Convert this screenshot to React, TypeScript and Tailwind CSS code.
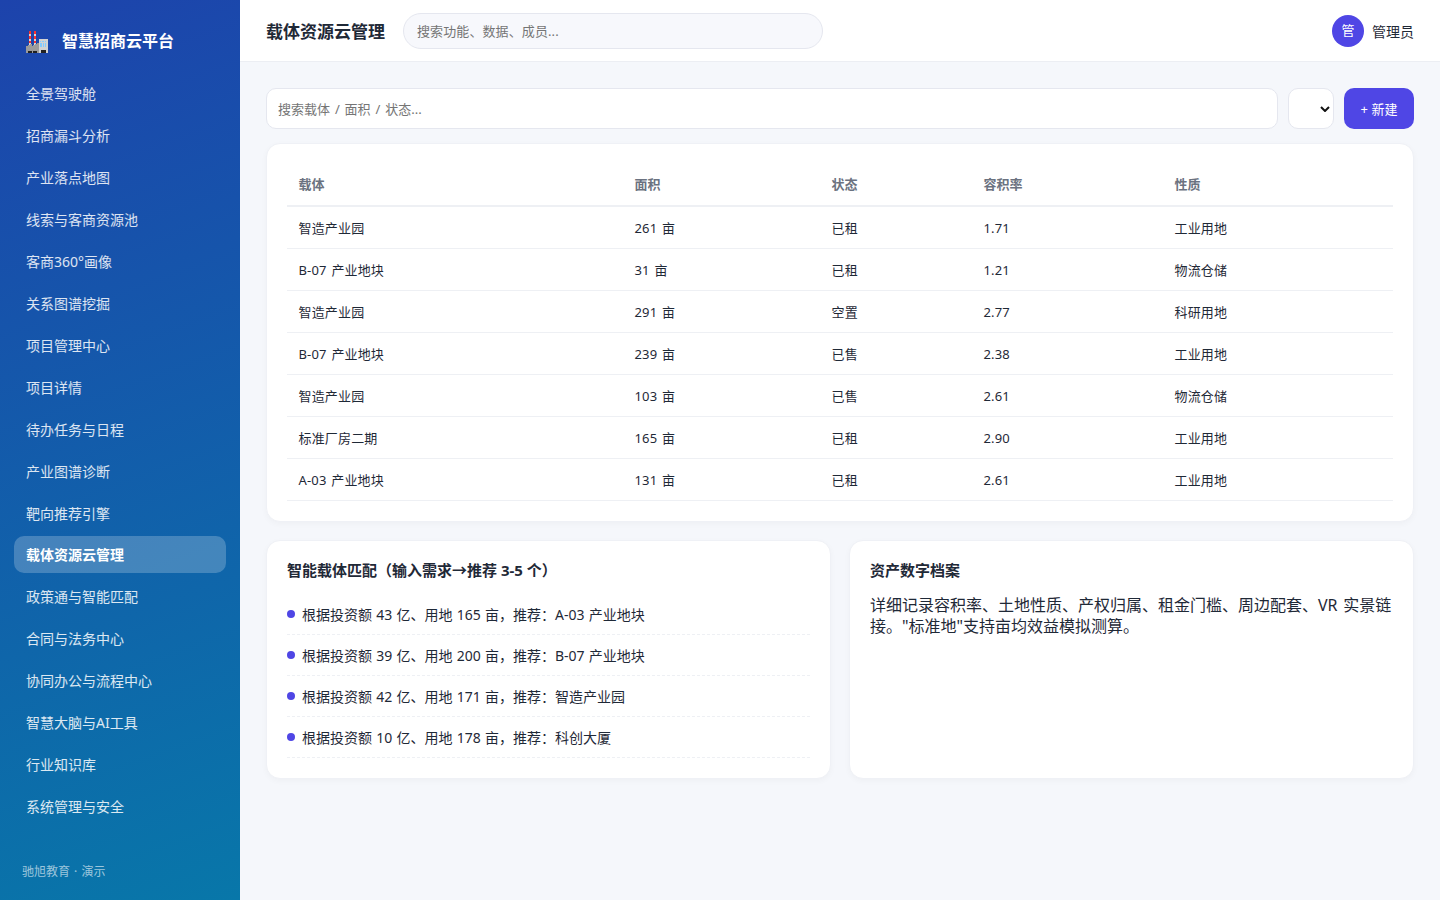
import React from "react";

const navItems = [
  "全景驾驶舱",
  "招商漏斗分析",
  "产业落点地图",
  "线索与客商资源池",
  "客商360°画像",
  "关系图谱挖掘",
  "项目管理中心",
  "项目详情",
  "待办任务与日程",
  "产业图谱诊断",
  "靶向推荐引擎",
  "载体资源云管理",
  "政策通与智能匹配",
  "合同与法务中心",
  "协同办公与流程中心",
  "智慧大脑与AI工具",
  "行业知识库",
  "系统管理与安全",
];

const activeIndex = 11;

const columns = ["载体", "面积", "状态", "容积率", "性质"];

const rows = [
  ["智造产业园", "261 亩", "已租", "1.71", "工业用地"],
  ["B-07 产业地块", "31 亩", "已租", "1.21", "物流仓储"],
  ["智造产业园", "291 亩", "空置", "2.77", "科研用地"],
  ["B-07 产业地块", "239 亩", "已售", "2.38", "工业用地"],
  ["智造产业园", "103 亩", "已售", "2.61", "物流仓储"],
  ["标准厂房二期", "165 亩", "已租", "2.90", "工业用地"],
  ["A-03 产业地块", "131 亩", "已租", "2.61", "工业用地"],
];

const matches = [
  "根据投资额 43 亿、用地 165 亩，推荐：A-03 产业地块",
  "根据投资额 39 亿、用地 200 亩，推荐：B-07 产业地块",
  "根据投资额 42 亿、用地 171 亩，推荐：智造产业园",
  "根据投资额 10 亿、用地 178 亩，推荐：科创大厦",
];

const FactoryIcon = () => (
  <svg width="22" height="22" viewBox="0 0 22 22" shapeRendering="crispEdges">
    <path fill="#d6d6d6" d="M3 0h2v14H3zM8 0h2v14H8z" />
    <path
      fill="#f8312f"
      d="M3 0h2v3H3zM3 5h2v3H3zM3 10h2v2H3zM8 0h2v3H8zM8 5h2v3H8zM8 10h2v2H8z"
    />
    <path fill="#9b9b9b" d="M0 15h2v-1h2v-1h2v2h1v-1h2v-1h2v-1h2v10H0z" />
    <path fill="#d3d3d3" d="M13 8h9v14h-9z" />
    <path
      fill="#83cbff"
      d="M14 10h1v1h-1zM16 10h2v1h-2zM19 10h1v1h-1zM14 12h2v4h-2zM17 12h1v4h-1zM19 12h1v4h-1z"
    />
    <path fill="#212121" d="M2 20h4v2H2zM7 20h4v2H7zM15 19h5v3h-5z" />
  </svg>
);

const Sidebar = () => (
  <aside className="flex h-full w-60 shrink-0 flex-col bg-[linear-gradient(160deg,#1d43ac,#0877a9)] px-3.5 text-white">
    <div className="flex h-[74px] items-center gap-3.5 pt-2 pl-3">
      <div className="pt-0.5">
        <FactoryIcon />
      </div>
      <span className="text-base font-bold">智慧招商云平台</span>
    </div>
    <nav className="flex flex-col gap-[5px]">
      {navItems.map((item, i) => (
        <a
          key={item}
          data-active={i === activeIndex ? true : undefined}
          className="peer flex h-[37px] items-center rounded-[10px] px-3 pt-0.5 text-sm text-white/85 peer-data-active:pt-0 data-active:bg-white/22 data-active:pt-0 data-active:font-bold data-active:text-white"
        >
          {item}
        </a>
      ))}
    </nav>
    <div className="mt-auto px-2 pb-5 text-xs leading-4 text-white/60 [word-spacing:1px]">
      驰旭教育 · 演示
    </div>
  </aside>
);

const Header = () => (
  <header className="flex h-[62px] shrink-0 items-center border-b border-[#eceef3] bg-white px-[26px]">
    <h1 className="pt-0.5 text-[17px] font-bold">载体资源云管理</h1>
    <input
      className="ml-[18px] h-9 w-[420px] rounded-full border border-[#e5e7ef] bg-[#f7f8fc] px-[13px] text-[13px] tracking-[0.1px] placeholder:text-[#757575]"
      placeholder="搜索功能、数据、成员..."
    />
    <div className="ml-auto flex items-center gap-2 text-sm">
      <div className="flex size-8 items-center justify-center rounded-full bg-[#4f46e5] text-[13px] text-white">
        管
      </div>
      <span className="pt-0.5">管理员</span>
    </div>
  </header>
);

const Toolbar = () => (
  <div className="flex h-[41px] gap-2.5">
    <input
      className="min-w-0 flex-1 rounded-[10px] border border-[#e5e7ef] bg-white px-[11px] pt-0.5 text-[13px] [word-spacing:1.5px] placeholder:text-[#757575]"
      placeholder="搜索载体 / 面积 / 状态..."
    />
    <button className="flex w-[46px] items-center justify-end rounded-[10px] border border-[#e5e7ef] bg-white pr-[3px]">
      <svg width="10" height="6" viewBox="0 0 10 6" fill="none">
        <path d="M1 1l4 4 4-4" stroke="#111" strokeWidth="2" />
      </svg>
    </button>
    <button className="w-[70px] rounded-[10px] bg-[#4f46e5] pt-0.5 text-[13px] text-white">
      + 新建
    </button>
  </div>
);

const card =
  "rounded-[14px] border border-[#eff1f6] bg-white px-5 shadow-[0_2px_6px_rgba(17,24,39,0.03)]";

const ResourceTable = () => (
  <section className={`${card} mt-3.5 h-[379px] pt-5`}>
    <table className="w-full table-fixed border-collapse text-left text-[13px]">
      <colgroup>
        <col className="w-[336px]" />
        <col className="w-[197px]" />
        <col className="w-[152px]" />
        <col className="w-[191px]" />
        <col />
      </colgroup>
      <thead>
        <tr className="h-[42px] border-b-2 border-[#eef0f4] text-[#6b7280]">
          {columns.map((name) => (
            <th key={name} className="pr-3 pl-[11.5px] font-bold">
              {name}
            </th>
          ))}
        </tr>
      </thead>
      <tbody>
        {rows.map((row, i) => (
          <tr key={i} className="h-[42px] border-b border-[#eef0f4]">
            {row.map((cell, j) => (
              <td
                key={j}
                className="pt-[3px] pr-3 pl-[11.5px] tracking-[0.16px] [word-spacing:1.2px]"
              >
                {cell}
              </td>
            ))}
          </tr>
        ))}
      </tbody>
    </table>
  </section>
);

const MatchCard = () => (
  <section className={`${card} h-[239px] pt-[19px]`}>
    <h3 className="text-[15px] leading-5 font-bold">
      智能载体匹配（输入需求→推荐 3-5 个）
    </h3>
    <ul className="mt-3.5">
      {matches.map((text) => (
        <li
          key={text}
          className="flex h-[41px] items-center gap-[7px] border-b border-dashed border-[#eef0f4] text-sm"
        >
          <span className="size-2 shrink-0 rounded-full bg-[#4f46e5]" />
          <span className="pt-0.5 [word-spacing:0.6px]">{text}</span>
        </li>
      ))}
    </ul>
  </section>
);

const ArchiveCard = () => (
  <section className={`${card} h-[239px] pt-[19px]`}>
    <h3 className="text-[15px] leading-5 font-bold">资产数字档案</h3>
    <p className="mt-[15px] text-base leading-[21px] [word-spacing:1.5px]">
      详细记录容积率、土地性质、产权归属、租金门槛、周边配套、VR
      实景链接。"标准地"支持亩均效益模拟测算。
    </p>
  </section>
);

export default function App() {
  return (
    <div className="flex h-screen overflow-hidden bg-[#f5f7fb] font-['Noto_Sans','Noto_Sans_CJK_SC',sans-serif] text-[#1f2937]">
      <Sidebar />
      <div className="flex min-w-0 flex-1 flex-col">
        <Header />
        <main className="flex-1 p-[26px]">
          <Toolbar />
          <ResourceTable />
          <div className="mt-[18px] grid grid-cols-2 gap-[18px]">
            <MatchCard />
            <ArchiveCard />
          </div>
        </main>
      </div>
    </div>
  );
}
